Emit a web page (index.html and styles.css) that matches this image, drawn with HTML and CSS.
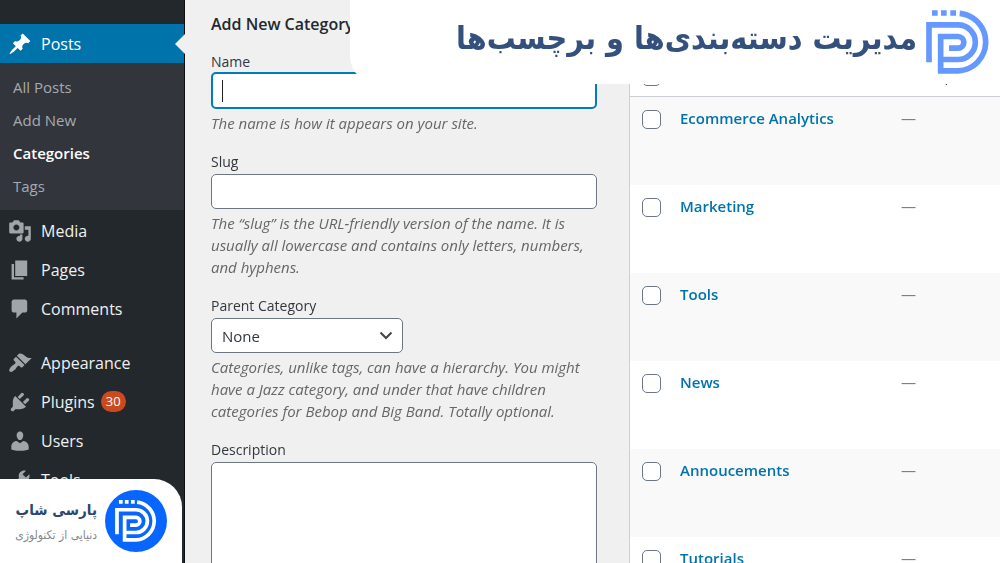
FILE: index.html
```html
<!DOCTYPE html>
<html lang="en">
<head>
<meta charset="utf-8">
<meta name="viewport" content="width=device-width, initial-scale=1">
<title>Categories</title>
<link rel="stylesheet" href="styles.css">
</head>
<body>
<svg width="0" height="0" class="defs" aria-hidden="true">
  <symbol id="mark" viewBox="138 30 192 191">
    <path d="M156 30h17v17h-17zM183 30h17v17h-17zM211 30h17v17h-17z" fill="currentColor"/>
    <path d="M239 39.5A86.500 86.500 0 0 1 234.500 212H182V109H234A17.500 17.500 0 0 1 234 144H207M147 186V74H234A52 52 0 0 1 234 178H182" fill="none" stroke="currentColor" stroke-width="17"/>
  </symbol>
</svg>
<div class="app">
  <nav class="sidebar" aria-label="Admin menu">
    <a class="item current" href="#"><svg class="icon" viewBox="0 0 20 20"><path d="M10.44 3.02l1.82-1.82 6.36 6.35-1.83 1.82c-1.05-.68-2.48-.57-3.41.36l-.75.75c-.92.93-1.04 2.35-.35 3.41l-1.83 1.82-2.41-2.41-2.8 2.79c-.42.42-3.38 2.71-3.8 2.29s1.86-3.39 2.28-3.81l2.79-2.79L4.1 9.36l1.83-1.82c1.05.69 2.48.57 3.4-.36l.75-.75c.93-.92 1.05-2.35.36-3.41z"/></svg>Posts</a>
    <div class="submenu">
      <a href="#">All Posts</a>
      <a href="#">Add New</a>
      <a class="active" href="#">Categories</a>
      <a href="#">Tags</a>
    </div>
    <div class="group">
      <a class="item" href="#"><svg class="icon" viewBox="0 0 20 20"><path d="M13 11V4c0-.55-.45-1-1-1h-1.670L9 1H5L3.670 3H2c-.55 0-1 .45-1 1v7c0 .55.45 1 1 1h10c.55 0 1-.45 1-1zM7 4.500c1.380 0 2.500 1.120 2.500 2.500S8.380 9.500 7 9.500 4.500 8.380 4.500 7 5.620 4.500 7 4.500zM14 6h5v10.500c0 1.380-1.120 2.500-2.500 2.500S14 17.880 14 16.500s1.120-2.500 2.500-2.500c.17 0 .34.02.5.05V9h-3V6zm-4 8.050V13h2v3.500c0 1.380-1.120 2.500-2.500 2.500S7 17.880 7 16.500 8.120 14 9.500 14c.17 0 .34.02.5.05z"/></svg>Media</a>
      <a class="item" href="#"><svg class="icon" viewBox="0 0 20 20"><path d="M6 15V2h10v13H6zm-1 1h8v2H3V5h2v11z"/></svg>Pages</a>
      <a class="item" href="#"><svg class="icon" viewBox="0 0 20 20"><path d="M5 2h9c1.100 0 2 .9 2 2v7c0 1.100-.9 2-2 2h-2l-5 5v-5H5c-1.100 0-2-.9-2-2V4c0-1.100.9-2 2-2z"/></svg>Comments</a>
    </div>
    <div class="group spaced">
      <a class="item" href="#"><svg class="icon" viewBox="0 0 20 20"><path d="M14.48 11.06L7.41 3.99l1.5-1.5c.5-.56 2.3-.47 3.51.32 1.21.8 1.43 1.28 2.91 2.1 1.18.64 2.45 1.26 4.45.85zm-.71.71L6.7 4.7 4.93 6.47c-.39.39-.39 1.02 0 1.41l1.06 1.06c.39.39.39 1.03 0 1.42-.6.6-1.43 1.11-2.21 1.69-.35.26-.7.53-1.01.84C1.43 14.23.4 16.08 1.4 17.07c.99 1 2.84-.03 4.18-1.36.31-.31.58-.66.85-1.02.57-.78 1.08-1.61 1.69-2.21.39-.39 1.02-.39 1.41 0l1.06 1.06c.39.39 1.02.39 1.41 0z"/></svg>Appearance</a>
      <a class="item" href="#"><svg class="icon" viewBox="0 0 20 20"><path d="M13.11 4.36L9.87 7.6 8 5.73l3.24-3.24c.35-.34 1.05-.2 1.56.32.52.51.66 1.21.31 1.55zm-8 1.77l.91-1.12 9.01 9.01-1.19.84c-.71.71-2.63 1.16-3.82 1.16H6.14L4.9 17.26c-.59.59-1.54.59-2.12 0-.59-.58-.59-1.53 0-2.12l1.24-1.24v-3.88c0-1.13.4-3.19 1.09-3.89zm7.26 3.97l3.24-3.24c.34-.35 1.04-.21 1.55.31.52.51.66 1.21.31 1.55l-3.24 3.25z"/></svg>Plugins<span class="count">30</span></a>
      <a class="item" href="#"><svg class="icon" viewBox="0 0 20 20"><path d="M10 9.25c-2.27 0-2.73-3.44-2.73-3.44C7 4.02 7.82 2 9.97 2c2.16 0 2.98 2.02 2.71 3.81 0 0-.41 3.44-2.68 3.44zm0 2.57L12.72 10c2.39 0 4.52 2.33 4.52 4.53v2.49s-3.65 1.13-7.24 1.13c-3.65 0-7.24-1.13-7.24-1.13v-2.49c0-2.25 1.94-4.48 4.47-4.48z"/></svg>Users</a>
      <a class="item" href="#"><svg class="icon" viewBox="0 0 20 20"><path d="M16.68 9.77c-1.34 1.34-3.3 1.67-4.95.99l-5.41 6.52c-.99.99-2.59.99-3.58 0s-.99-2.59 0-3.57l6.52-5.42c-.68-1.65-.35-3.61.99-4.95 1.28-1.28 3.12-1.62 4.72-1.06l-2.89 2.89 2.82 2.82 2.86-2.87c.53 1.58.18 3.39-1.08 4.65zM3.81 16.21c.4.39 1.04.39 1.43 0 .4-.4.4-1.04 0-1.43-.39-.4-1.03-.4-1.43 0-.39.39-.39 1.03 0 1.43z"/></svg>Tools</a>
    </div>
  </nav>
  <main class="content">
    <form class="form">
      <h2>Add New Category</h2>
      <div class="field">
        <label for="name">Name</label>
        <input class="box focused" id="name" type="text" autofocus>
        <p>The name is how it appears on your site.</p>
      </div>
      <div class="field">
        <label for="slug">Slug</label>
        <input class="box" id="slug" type="text">
        <p>The “slug” is the URL-friendly version of the name. It is usually all lowercase and contains only letters, numbers, and hyphens.</p>
      </div>
      <div class="field">
        <label for="parent">Parent Category</label>
        <div class="select-wrap">
          <select class="box" id="parent"><option>None</option></select>
          <svg class="chevron" viewBox="0 0 14 9" aria-hidden="true"><path d="M1.500 1.500L7 7l5.500-5.500"/></svg>
        </div>
        <p>Categories, unlike tags, can have a hierarchy. You might have a Jazz category, and under that have children categories for Bebop and Big Band. Totally optional.</p>
      </div>
      <div class="field">
        <label for="description">Description</label>
        <textarea class="box" id="description"></textarea>
      </div>
    </form>
    <table class="list">
      <thead>
        <tr><td class="check"><input type="checkbox" aria-label="Select all"></td><td></td><th class="desc" scope="col">Description</th></tr>
      </thead>
      <tbody>
        <tr><td class="check"><input type="checkbox" id="c1" aria-labelledby="t1"></td><td><a id="t1" href="#">Ecommerce Analytics</a></td><td class="desc">—</td></tr>
        <tr><td class="check"><input type="checkbox" id="c2" aria-labelledby="t2"></td><td><a id="t2" href="#">Marketing</a></td><td class="desc">—</td></tr>
        <tr><td class="check"><input type="checkbox" id="c3" aria-labelledby="t3"></td><td><a id="t3" href="#">Tools</a></td><td class="desc">—</td></tr>
        <tr><td class="check"><input type="checkbox" id="c4" aria-labelledby="t4"></td><td><a id="t4" href="#">News</a></td><td class="desc">—</td></tr>
        <tr><td class="check"><input type="checkbox" id="c5" aria-labelledby="t5"></td><td><a id="t5" href="#">Annoucements</a></td><td class="desc">—</td></tr>
        <tr><td class="check"><input type="checkbox" id="c6" aria-labelledby="t6"></td><td><a id="t6" href="#">Tutorials</a></td><td class="desc">—</td></tr>
      </tbody>
    </table>
  </main>
  <header class="banner" lang="fa" dir="rtl">
    <svg class="banner-mark" aria-hidden="true"><use href="#mark"/></svg>
    <h1>مدیریت دسته‌بندی‌ها و برچسب‌ها</h1>
  </header>
  <aside class="brand" lang="fa" dir="rtl">
    <span class="brand-disc"><svg aria-hidden="true"><use href="#mark"/></svg></span>
    <div>
      <strong>پارسی شاپ</strong>
      <small>دنیایی از تکنولوژی</small>
    </div>
  </aside>
</div>
</body>
</html>
```
FILE: styles.css
```css
* {
  box-sizing: border-box;
}

body {
  margin: 0;
  font-family: "Open Sans", "Noto Sans", sans-serif;
  font-size: 15px;
  color: #32373c;
  background: #f0f0f0;
}

a {
  color: inherit;
  text-decoration: none;
}

.defs {
  position: absolute;
}

.app {
  position: relative;
  display: grid;
  grid-template-columns: 185px minmax(0, 1fr);
  height: 100vh;
  overflow: hidden;
}

/* Admin menu */
.sidebar {
  padding-top: 24px;
  background: #23282d;
  border-right: 1px solid #0c0f12;
}

.item {
  display: flex;
  align-items: center;
  gap: 9px;
  height: 39px;
  padding-left: 8px;
  font-size: 16px;
  color: #f0f0f1;
}

.icon {
  width: 24px;
  height: 24px;
  fill: #a0a5aa;
}

.current {
  position: relative;
  color: #fff;
  background: #0073aa;
}

.current .icon {
  fill: #fff;
}

.current::after {
  content: "";
  position: absolute;
  top: 10px;
  right: -1px;
  border: 10px solid transparent;
  border-left: 0;
  border-right-color: #f0f0f0;
}

.submenu {
  display: grid;
  padding: 8px 0 7px 13px;
  font-size: 15px;
  line-height: 33px;
  color: #a7aaaf;
  background: #32353c;
}

.submenu .active {
  font-weight: 600;
  color: #fff;
}

.group {
  padding-top: 1px;
}

.spaced {
  padding-top: 15px;
}

.count {
  min-width: 25px;
  margin-left: -3px;
  border-radius: 11px;
  font-size: 13px;
  line-height: 21px;
  text-align: center;
  color: #fff;
  background: #ca4a1f;
}

/* Form */
.content {
  display: grid;
  grid-template-columns: minmax(0, 386fr) minmax(0, 371fr);
  gap: 32px;
  padding-left: 26px;
}

.form {
  padding-top: 12px;
}

.form h2 {
  margin: 0 0 16px;
  font-size: 16px;
  font-weight: 600;
  line-height: 24px;
  color: #23282d;
}

.field {
  margin-bottom: 18px;
}

.field label {
  display: block;
  font-size: 14px;
  line-height: 20px;
}

.field p {
  margin: 3px 0 0;
  font-size: 15px;
  font-style: italic;
  line-height: 22px;
  color: #666;
}

.box {
  display: block;
  width: 100%;
  height: 35px;
  margin-top: 2px;
  padding: 0 10px;
  border: 1px solid #6c7781;
  border-radius: 5px;
  font: inherit;
  color: #32373c;
  background: #fff;
  outline: 0;
}

.focused {
  height: 37px;
  margin-top: 0;
  border: 2px solid #007cba;
  background: #fff linear-gradient(#222, #222) 9px 50% / 1px 22px no-repeat;
  caret-color: transparent;
}

.select-wrap {
  position: relative;
  width: 192px;
}

select.box {
  appearance: none;
}

.chevron {
  position: absolute;
  top: 13px;
  right: 10px;
  width: 14px;
  height: 9px;
  fill: none;
  stroke: #444;
  stroke-width: 2;
}

textarea.box {
  height: 160px;
  resize: none;
}

/* Category table */
.list {
  width: 100%;
  height: max-content;
  margin-top: 54px;
  border-left: 1px solid #ccd0d4;
  border-collapse: separate;
  border-spacing: 0;
  table-layout: fixed;
  background: #fff;
}

.list td,
.list th {
  padding: 10px 0 0;
  line-height: 22px;
  text-align: left;
  vertical-align: top;
}

.list th {
  font-weight: 400;
}

.list thead tr {
  height: 43px;
}

.list thead td,
.list thead th {
  border-bottom: 1px solid #ccd0d4;
}

.list tbody tr {
  height: 88px;
}

.list tbody tr:nth-child(odd) {
  background: #f9f9f9;
}

.list a {
  font-weight: 600;
  color: #0073aa;
}

.list .check {
  width: 50px;
  padding-left: 12px;
}

.list .desc {
  width: 99px;
}

.list tbody .desc {
  color: #777;
}

.list input {
  display: block;
  appearance: none;
  width: 19px;
  height: 19px;
  margin: 3px 0 0;
  border: 1px solid #6c7781;
  border-radius: 5px;
  background: #fff;
}

/* Title banner */
.banner {
  position: absolute;
  top: 0;
  right: 0;
  display: flex;
  gap: 9px;
  width: 65%;
  height: 84px;
  padding: 10px 10px 0 0;
  border-bottom-left-radius: 28px;
  background: #fff;
}

.banner-mark {
  flex: none;
  width: 64px;
  height: 64px;
  color: #6699ff;
}

.banner h1 {
  margin: 0;
  font-family: "DejaVu Sans Condensed", "DejaVu Sans", sans-serif;
  font-size: 32px;
  line-height: 56px;
  white-space: nowrap;
  color: #34507c;
}

/* Site badge */
.brand {
  position: absolute;
  bottom: 0;
  left: 0;
  display: flex;
  align-items: center;
  gap: 8px;
  width: 182px;
  height: 84px;
  padding-right: 15px;
  border-top-right-radius: 28px;
  font-family: "DejaVu Sans Condensed", "DejaVu Sans", sans-serif;
  white-space: nowrap;
  background: #fff;
}

.brand-disc {
  display: grid;
  flex: none;
  place-items: center;
  width: 62px;
  height: 62px;
  border-radius: 50%;
  color: #fff;
  background: #0866ff;
}

.brand-disc svg {
  width: 42px;
  height: 42px;
}

.brand strong,
.brand small {
  display: block;
}

.brand strong {
  font-size: 15px;
  line-height: 28px;
  color: #2c4770;
}

.brand small {
  font-size: 12px;
  line-height: 22px;
  color: #85888c;
}
```
